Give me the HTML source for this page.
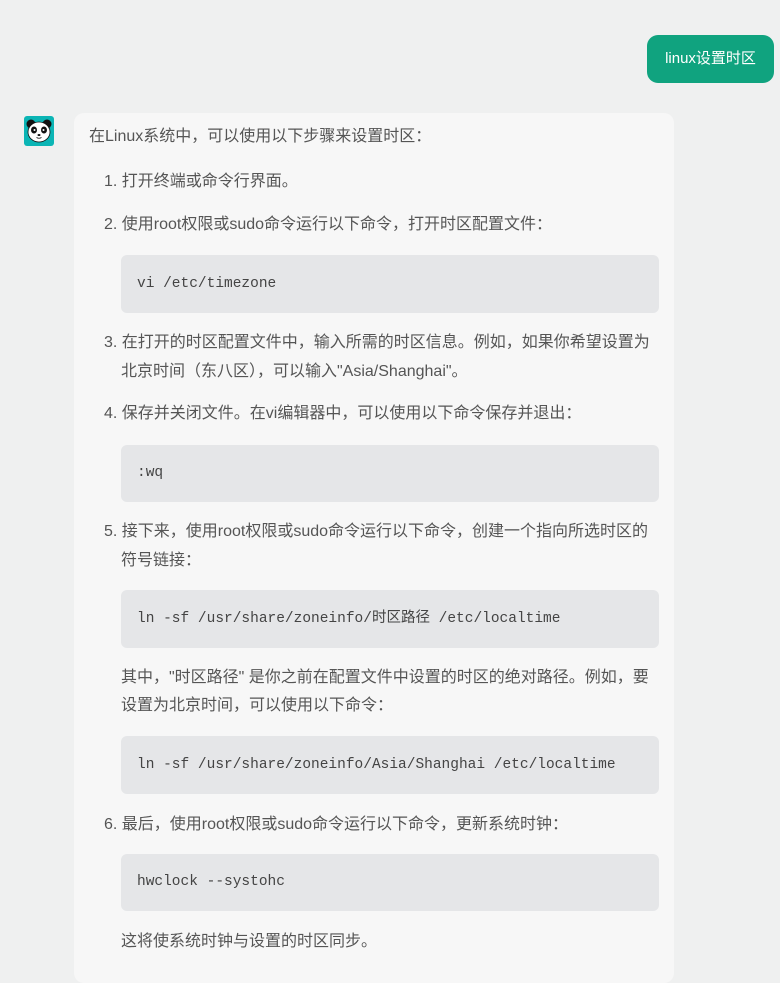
<!DOCTYPE html>
<html><head><meta charset="utf-8"><style>
*{margin:0;padding:0;box-sizing:border-box}
body{width:780px;height:961px;background:#eff0f0;position:relative;overflow:hidden;font-family:"Liberation Sans","Noto Sans CJK SC",sans-serif;font-size:16px;color:#555}
.bub{position:absolute;left:647px;top:35px;width:127px;height:48px;background:#10a37f;border-radius:11px;color:#fff;line-height:48px;text-align:center;font-size:15px}
.av{position:absolute;left:24px;top:116px;width:30px;height:30px;background:#0bb5b5;border-radius:3px;overflow:hidden}
.card{position:absolute;left:74px;top:113px;width:600px;height:870px;background:#f7f7f7;border-radius:10px}
.t{position:absolute;white-space:nowrap;line-height:20px}
.code{position:absolute;left:121px;width:538px;background:#e5e6e8;border-radius:6px;font-family:"Liberation Mono","Noto Sans CJK SC",monospace;font-size:14.5px;color:#444;padding-left:16px;white-space:nowrap}
</style></head><body>
<div class="bub">linux设置时区</div>
<div class="av"><svg width="30" height="30" viewBox="0 0 30 30">
<circle cx="7" cy="8" r="4.5" fill="#111"/><circle cx="23" cy="8" r="4.5" fill="#111"/>
<ellipse cx="15" cy="16" rx="11" ry="10" fill="#fff" stroke="#111" stroke-width="0.8"/>
<ellipse cx="10" cy="14" rx="3" ry="3.5" fill="#111"/><ellipse cx="20" cy="14" rx="3" ry="3.5" fill="#111"/>
<circle cx="10.5" cy="14" r="1" fill="#fff"/><circle cx="19.5" cy="14" r="1" fill="#fff"/>
<ellipse cx="15" cy="19" rx="1.5" ry="1" fill="#111"/><path d="M12.5 21.5q2.5 1.5 5 0" stroke="#111" fill="none" stroke-width="0.8"/></svg></div>
<div class="card"></div>
<div class="t" style="left:89px;top:127px">在Linux系统中，可以使用以下步骤来设置时区：</div>
<div class="t" style="left:104px;top:172px">1. 打开终端或命令行界面。</div>
<div class="t" style="left:104px;top:215px">2. 使用root权限或sudo命令运行以下命令，打开时区配置文件：</div>
<div class="code" style="top:255px;height:58px;line-height:58px">vi /etc/timezone</div>
<div class="t" style="left:104px;top:333px">3. 在打开的时区配置文件中，输入所需的时区信息。例如，如果你希望设置为</div>
<div class="t" style="left:121px;top:362px">北京时间（东八区），可以输入"Asia/Shanghai"。</div>
<div class="t" style="left:104px;top:404px">4. 保存并关闭文件。在vi编辑器中，可以使用以下命令保存并退出：</div>
<div class="code" style="top:445px;height:57px;line-height:57px">:wq</div>
<div class="t" style="left:104px;top:522px">5. 接下来，使用root权限或sudo命令运行以下命令，创建一个指向所选时区的</div>
<div class="t" style="left:121px;top:551px">符号链接：</div>
<div class="code" style="top:590px;height:58px;line-height:58px">ln -sf /usr/share/zoneinfo/时区路径 /etc/localtime</div>
<div class="t" style="left:121px;top:668px">其中，"时区路径" 是你之前在配置文件中设置的时区的绝对路径。例如，要</div>
<div class="t" style="left:121px;top:696px">设置为北京时间，可以使用以下命令：</div>
<div class="code" style="top:736px;height:58px;line-height:58px">ln -sf /usr/share/zoneinfo/Asia/Shanghai /etc/localtime</div>
<div class="t" style="left:104px;top:815px">6. 最后，使用root权限或sudo命令运行以下命令，更新系统时钟：</div>
<div class="code" style="top:854px;height:57px;line-height:57px">hwclock --systohc</div>
<div class="t" style="left:121px;top:932px">这将使系统时钟与设置的时区同步。</div>
</body></html>
